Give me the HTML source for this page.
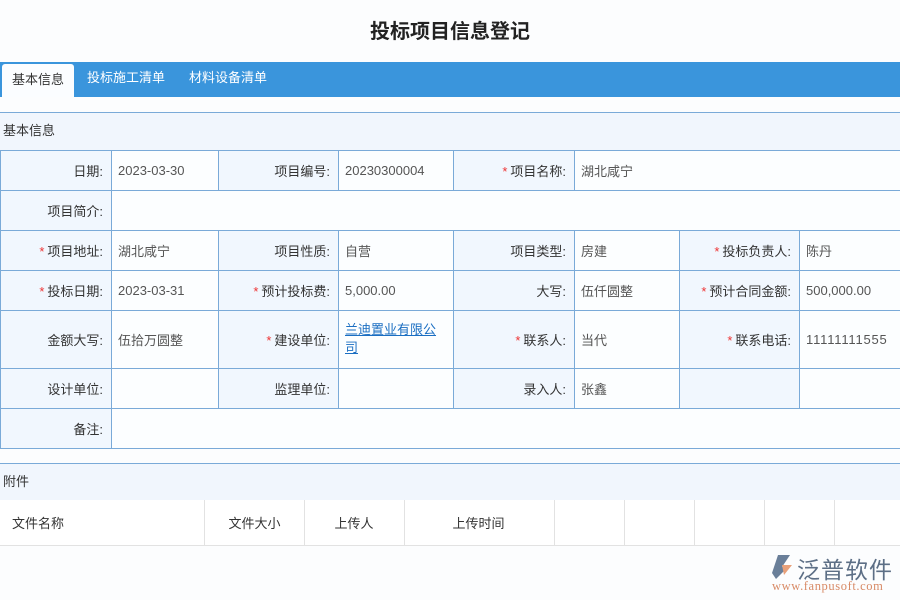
<!DOCTYPE html>
<html><head><meta charset="utf-8"><style>
*{margin:0;padding:0;box-sizing:border-box}
body{width:900px;height:600px;background:#fcfdfe;font-family:"Liberation Sans","Noto Sans CJK SC",sans-serif;font-size:13px;color:#333;position:relative;overflow:hidden}
.title{position:absolute;top:15px;left:0;width:900px;text-align:center;font-size:20px;font-weight:bold;color:#222}
.tabs{position:absolute;top:62px;left:0;width:900px;height:35px;background:#3a95dc}
.tab{position:absolute;top:0;height:35px;line-height:31px;color:#fff;font-size:13px}
.tab.act{top:2px;left:2px;width:72px;height:33px;background:#fbfdff;color:#333;text-align:center;border-radius:3px 3px 0 0}
.sec{position:absolute;left:0;width:900px;background:#f1f6fd;border-top:1px solid #7aaad8;padding-left:3px;color:#333}
table.f{position:absolute;top:150px;left:0;width:901px;border-collapse:collapse;table-layout:fixed}
table.f td{border:1px solid #7aaad8;height:40px;padding:0 6px;vertical-align:middle}
table.f td.l{background:#f1f7fe;text-align:right;padding-right:8px}
table.f td.v{background:#fcfeff;color:#555}
.r{color:#e33;margin-right:3px}
a{color:#1a6ec2;text-decoration:underline}
table.a{position:absolute;top:500px;left:0;width:900px;border-collapse:collapse;table-layout:fixed;background:#fff}
table.a td{height:45px;border-right:1px solid #e2e2e2;border-bottom:1px solid #e2e2e2;padding-left:12px}
</style></head><body>
<div class="title">投标项目信息登记</div>
<div class="tabs">
<div class="tab act">基本信息</div>
<div class="tab" style="left:87px">投标施工清单</div>
<div class="tab" style="left:189px">材料设备清单</div>
</div>
<div class="sec" style="top:112px;height:38px;line-height:36px">基本信息</div>
<table class="f">
<colgroup><col style="width:111px"><col style="width:107px"><col style="width:120px"><col style="width:115px"><col style="width:121px"><col style="width:105px"><col style="width:120px"><col style="width:102px"></colgroup>
<tr><td class="l">日期:</td><td class="v">2023-03-30</td><td class="l">项目编号:</td><td class="v">20230300004</td><td class="l"><span class="r">*</span>项目名称:</td><td class="v" colspan="3">湖北咸宁</td></tr>
<tr><td class="l">项目简介:</td><td class="v" colspan="7"></td></tr>
<tr><td class="l"><span class="r">*</span>项目地址:</td><td class="v">湖北咸宁</td><td class="l">项目性质:</td><td class="v">自营</td><td class="l">项目类型:</td><td class="v">房建</td><td class="l"><span class="r">*</span>投标负责人:</td><td class="v">陈丹</td></tr>
<tr><td class="l"><span class="r">*</span>投标日期:</td><td class="v">2023-03-31</td><td class="l"><span class="r">*</span>预计投标费:</td><td class="v">5,000.00</td><td class="l">大写:</td><td class="v">伍仟圆整</td><td class="l"><span class="r">*</span>预计合同金额:</td><td class="v">500,000.00</td></tr>
<tr><td class="l" style="height:58px">金额大写:</td><td class="v">伍拾万圆整</td><td class="l"><span class="r">*</span>建设单位:</td><td class="v" style="vertical-align:top;padding-top:10px;line-height:18px"><a>兰迪置业有限公司</a></td><td class="l"><span class="r">*</span>联系人:</td><td class="v">当代</td><td class="l"><span class="r">*</span>联系电话:</td><td class="v" style="white-space:nowrap;overflow:hidden;letter-spacing:0.8px">11111111555</td></tr>
<tr><td class="l">设计单位:</td><td class="v"></td><td class="l">监理单位:</td><td class="v"></td><td class="l">录入人:</td><td class="v">张鑫</td><td class="l" style="background:#f1f7fe"></td><td class="v"></td></tr>
<tr><td class="l">备注:</td><td class="v" colspan="7"></td></tr>
</table>
<div class="sec" style="top:463px;height:37px;line-height:35px">附件</div>
<table class="a">
<colgroup><col style="width:204px"><col style="width:100px"><col style="width:100px"><col style="width:150px"><col style="width:70px"><col style="width:70px"><col style="width:70px"><col style="width:70px"><col style="width:66px"></colgroup>
<tr><td>文件名称</td><td style="padding-left:24px">文件大小</td><td style="padding-left:30px">上传人</td><td style="padding-left:48px">上传时间</td><td></td><td></td><td></td><td></td><td></td></tr>
</table>
<svg style="position:absolute;left:768px;top:553px" width="28" height="28" viewBox="0 0 28 28"><path d="M10 2 L22 2 L14 14 L20 14 L8 26 L4 20 Z" fill="#6a7f99"/><path d="M14 12 L24 12 L16 22 Z" fill="#e8a07a"/></svg>
<div style="position:absolute;left:797px;top:551px;font-size:23px;color:#5d6f86;letter-spacing:1px">泛普软件</div>
<div style="position:absolute;left:772px;top:579px;font-size:12.5px;color:#d88a66;font-family:'Liberation Serif',serif;letter-spacing:0.6px">www.fanpusoft.com</div>
</body></html>
